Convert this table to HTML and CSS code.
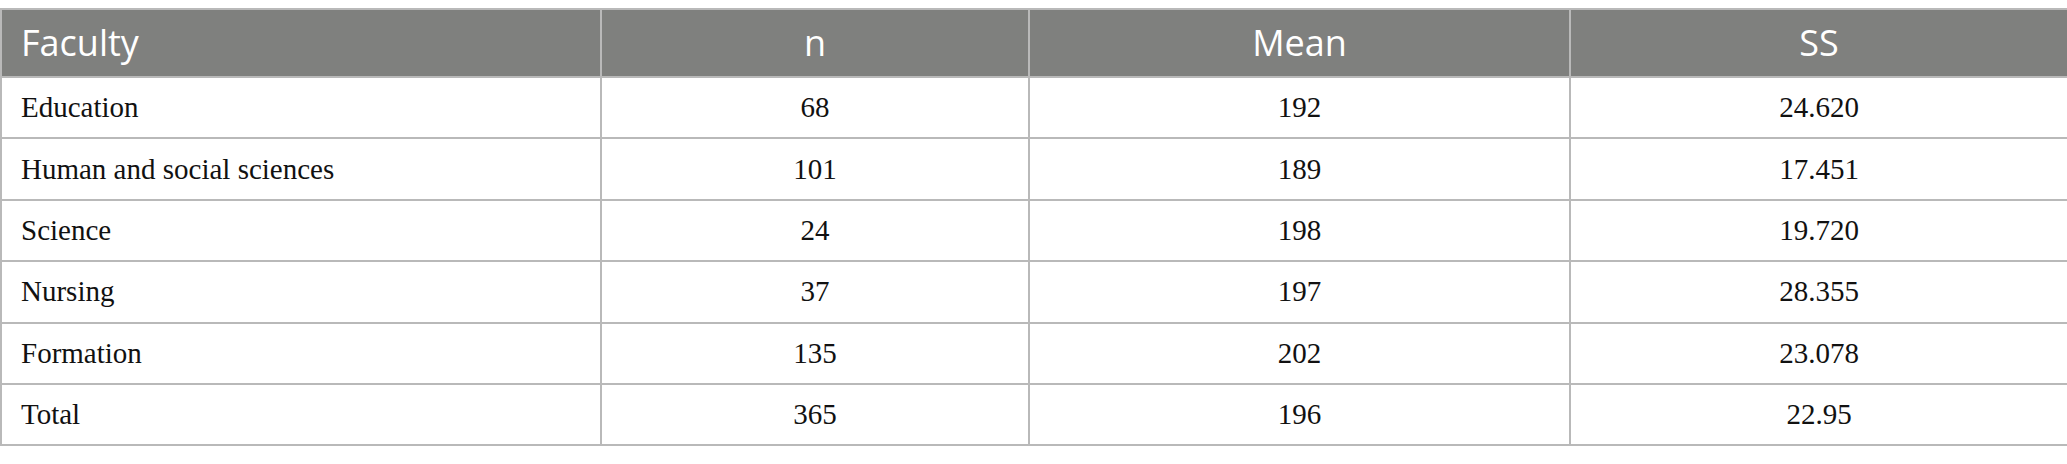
FILE: index.html
```html
<!DOCTYPE html>
<html lang="en">
<head>
<meta charset="utf-8">
<title>Faculty table</title>
<link rel="stylesheet" href="styles.css">
</head>
<body>
<table class="data">
  <colgroup>
    <col class="c1"><col class="c2"><col class="c3"><col class="c4">
  </colgroup>
  <thead>
    <tr>
      <th class="left">Faculty</th>
      <th>n</th>
      <th>Mean</th>
      <th>SS</th>
    </tr>
  </thead>
  <tbody>
    <tr><td class="left">Education</td><td>68</td><td>192</td><td>24.620</td></tr>
    <tr><td class="left">Human and social sciences</td><td>101</td><td>189</td><td>17.451</td></tr>
    <tr><td class="left">Science</td><td>24</td><td>198</td><td>19.720</td></tr>
    <tr><td class="left">Nursing</td><td>37</td><td>197</td><td>28.355</td></tr>
    <tr><td class="left">Formation</td><td>135</td><td>202</td><td>23.078</td></tr>
    <tr><td class="left">Total</td><td>365</td><td>196</td><td>22.95</td></tr>
  </tbody>
</table>
</body>
</html>
```

FILE: styles.css
```css
html, body {
  margin: 0;
  padding: 0;
  background: #ffffff;
}
body {
  padding-top: 8px;
}
.data {
  width: 2067px;
  border-collapse: collapse;
  table-layout: fixed;
}
.c1 { width: 600px; }
.c2 { width: 428px; }
.c3 { width: 541px; }
.c4 { width: 498px; }
.data th,
.data td {
  border: 2px solid #b9b9b9;
  text-align: center;
  vertical-align: middle;
  padding: 0 20px;
  white-space: nowrap;
}
.data th {
  background: #7f807e;
  color: #ffffff;
  font-family: "Open Sans", "Noto Sans", sans-serif;
  font-weight: 400;
  font-size: 36px;
  height: 64px;
  padding-bottom: 2px;
}
.data td {
  font-family: "Liberation Serif", "Times New Roman", serif;
  font-size: 29px;
  color: #111111;
  height: 59.4px;
}
.data th.left {
  text-align: left;
  padding-left: 19px;
}
.data td.left {
  text-align: left;
  padding-left: 19px;
}
```
